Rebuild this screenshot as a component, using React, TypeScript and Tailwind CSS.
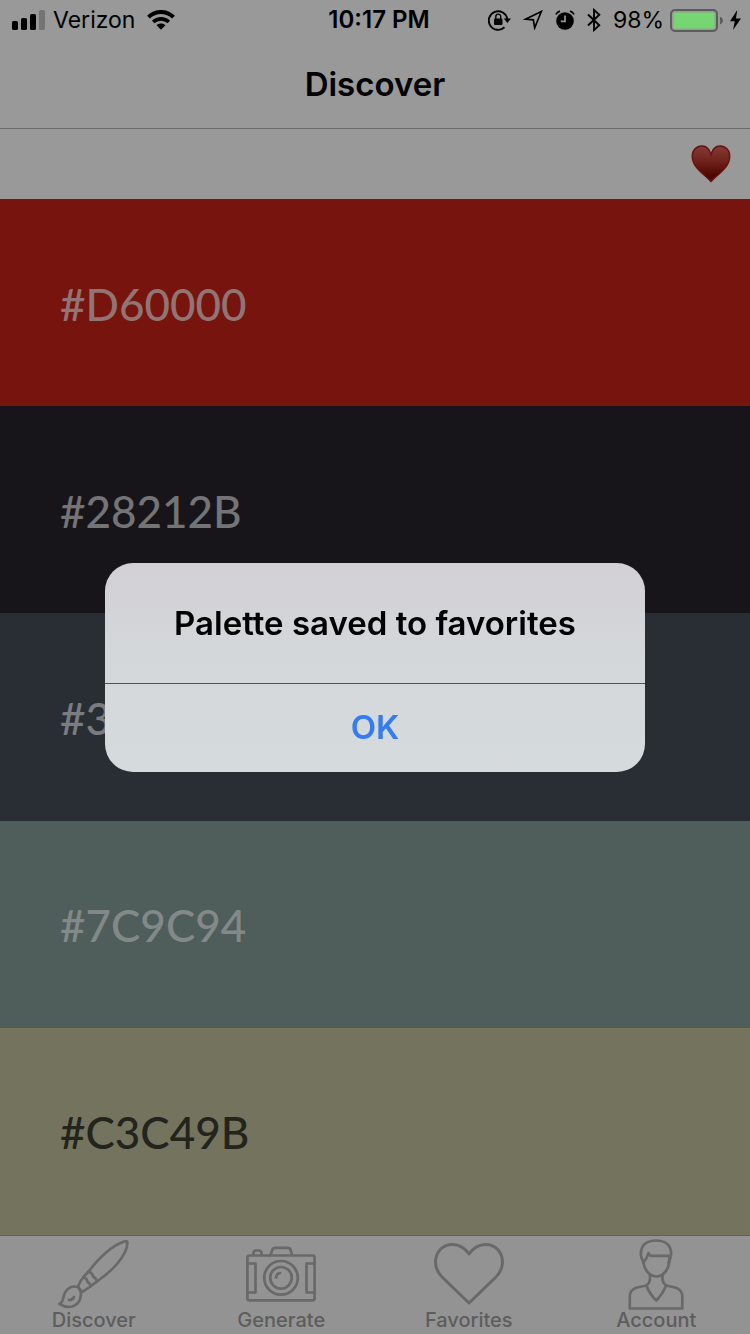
import React from "react";

type Swatch = { code: string; className: string };

const swatches: Swatch[] = [
  { code: "#D60000", className: "bg-[#76140d] text-[#917473]" },
  { code: "#28212B", className: "bg-[#17151a] text-[#747376]" },
  { code: "#3", className: "bg-[#292d34] text-[#7a7c80]" },
  { code: "#7C9C94", className: "bg-[#4f5e5a] text-[#828988]" },
  { code: "#C3C49B", className: "bg-[#74745e] text-[#23241d]" },
];

function SignalIcon() {
  return (
    <svg width="33" height="20" viewBox="0 0 33 20" aria-hidden="true">
      <rect x="0" y="11" width="6" height="9" rx="1.6" />
      <rect x="9" y="8" width="6" height="12" rx="1.6" />
      <rect x="18" y="4" width="6" height="16" rx="1.6" />
      <rect x="27" y="0" width="6" height="20" rx="1.6" fill="#747474" />
    </svg>
  );
}

function WifiIcon() {
  return (
    <svg width="28" height="20" viewBox="0 0 28 20" aria-hidden="true">
      <path d="M1.5 7.2C8.5 .2 19.500 .2 26.500 7.200" fill="none" stroke="#000" strokeWidth="4" />
      <path d="M6.200 12C10.600 7.800 17.400 7.800 21.800 12" fill="none" stroke="#000" strokeWidth="3.600" />
      <path d="M9.500 15.300C12 13 16 13 18.500 15.300L14 19.800Z" />
    </svg>
  );
}

function StatusIcons() {
  return (
    <>
      <svg width="23" height="22" viewBox="0 0 23 22" aria-hidden="true">
        <path d="M16.500 18.300A9.300 9.300 0 1 1 19.300 10" fill="none" stroke="#000" strokeWidth="1.900" />
        <path d="M15.800 9.500H23L19.400 14Z" />
        <rect x="6" y="9.500" width="8.500" height="6.500" rx="1" />
        <path d="M7.800 10V7.600a2.450 2.450 0 0 1 4.900 0V10" fill="none" stroke="#000" strokeWidth="1.400" />
      </svg>
      <svg className="ml-3" width="20" height="20" viewBox="0 0 20 20" aria-hidden="true">
        <path d="M18.300 1.500L2.500 9.200L10.300 9.800L11.700 17.800Z" fill="none" stroke="#000" strokeWidth="1.700" />
      </svg>
      <svg className="ml-3" width="20" height="20" viewBox="0 0 20 20" aria-hidden="true">
        <circle cx="10" cy="11" r="8.800" />
        <path d="M1 4.500Q2 2 5 1.200M19 4.500Q18 2 15 1.200" fill="none" stroke="#000" strokeWidth="1.800" />
        <path d="M10 5.500V11.300H5.800" fill="none" stroke="#999" strokeWidth="1.700" />
      </svg>
      <svg className="ml-3" width="14" height="24" viewBox="0 0 14 24" aria-hidden="true">
        <path d="M1 6.500L12.300 17.200L7 22V2L12.300 6.800L1 17.500" fill="none" stroke="#000" strokeWidth="1.900" />
      </svg>
    </>
  );
}

function BatteryIcon() {
  return (
    <svg className="ml-1.5" width="53" height="23" viewBox="0 0 53 23" aria-hidden="true">
      <rect x="1" y="1" width="46" height="21" rx="4" fill="none" stroke="#5c5c5c" strokeWidth="2" />
      <rect x="3.500" y="3.500" width="41" height="16" rx="1.500" fill="#76d672" />
      <path d="M50 7.500Q53 9 53 11.500Q53 14 50 15.500Z" fill="#5c5c5c" />
    </svg>
  );
}

function BoltIcon() {
  return (
    <svg className="ml-1.5" width="13" height="20" viewBox="0 0 13 20" aria-hidden="true">
      <path d="M8.200 0L1 11.200H5.800L4 20L12 8.400H7Z" />
    </svg>
  );
}

function SavedHeart() {
  return (
    <svg width="40" height="38" viewBox="0 0 40 38" aria-hidden="true">
      <defs>
        <linearGradient id="heart-fill" x1="0" y1="0" x2="0" y2="1">
          <stop offset="0" stopColor="#833b37" />
          <stop offset=".45" stopColor="#70201a" />
          <stop offset=".85" stopColor="#4d0600" />
          <stop offset="1" stopColor="#5a0a03" />
        </linearGradient>
      </defs>
      <path
        d="M20 9.500C18.500 4 15.500 1 11 1C5.500 1 1.200 5 1.200 11.500C1.200 21.500 11 27.500 20 36.500C29 27.500 38.800 21.500 38.800 11.500C38.800 5 34.500 1 29 1C24.500 1 21.500 4 20 9.500Z"
        fill="url(#heart-fill)"
        stroke="#66120c"
        strokeWidth="1.300"
      />
    </svg>
  );
}

const line = { fill: "none", stroke: "#696969", strokeWidth: 2.7, strokeLinejoin: "round", strokeLinecap: "round" } as const;

function BrushIcon() {
  return (
    <svg width="71" height="69" viewBox="0 0 71 69" {...line} aria-hidden="true">
      <path d="M30.500 31.500C41 18 54 6 65 2Q69 .5 69.300 2Q70 11 59 24C53 31 46 36.500 39 41.500L33 46Q29 49 24 52L20 46.500Q21.500 42 25.500 37Z" />
      <path d="M30.500 31.500Q34.500 33 35.500 37Q38 38 39 41.500" />
      <path d="M25.500 37Q29 38.500 29.500 42Q32 43 33 46" />
      <path d="M20 47Q14 45.500 10.500 48.500C6 52 6 55 5 59Q4 63 1.500 64Q8 68 14 66.500C21 64.500 24 58 22.500 51Z" />
      <path d="M11 60Q15 60 16 57" />
    </svg>
  );
}

function CameraIcon() {
  return (
    <svg width="70" height="56" viewBox="0 0 70 56" {...line} aria-hidden="true">
      <rect x="1.400" y="9.500" width="67.200" height="44.800" rx="2" />
      <path d="M7.500 9V7Q7.500 4.500 10 4.500H13Q15.500 4.500 15.500 7V9" />
      <path d="M24.500 9L26.500 3.500Q27 1.800 29 1.800H42Q44 1.800 44.500 3.500L46 9" />
      <path d="M1.400 17.500H9.500V46.500H1.400M68.600 17.500H60.500V46.500H68.600" />
      <circle cx="35" cy="31.800" r="16.800" />
      <circle cx="35" cy="31.800" r="10.800" />
      <path d="M30 31.500Q30.500 27.500 34 27" />
    </svg>
  );
}

function HeartIcon() {
  return (
    <svg width="70" height="62" viewBox="0 0 70 62" {...line} strokeWidth="3" aria-hidden="true">
      <path d="M35 11C30 4 25 1.500 18.500 1.500C8 1.500 1.500 9.500 1.500 19.500C1.500 26 4 30 8.500 34.500L35 60L61.500 34.500C66 30 68.500 26 68.500 19.500C68.500 9.500 62 1.500 51.500 1.500C45 1.500 40 4 35 11Z" />
    </svg>
  );
}

function PersonIcon() {
  return (
    <svg width="56" height="71" viewBox="0 0 56 71" {...line} aria-hidden="true">
      <path d="M15.500 23.500C10 13 13 1.500 28 1.500C43 1.500 46 13 40.500 23.500" />
      <path d="M15.500 23.500Q19.500 19 20.500 14Q21 16.800 24 16.800H41.500V20C41.500 29 36 37.500 28.500 37.500C21 37.500 16 30 15.500 23.500Z" />
      <path d="M22 36V40Q22 43.500 18.500 46.500Q21 54.500 28.300 61.500Q35 54.500 38 46.500Q34.500 43.500 34.500 40V36" />
      <path d="M18.500 46.500L9 48.500Q1.800 50.500 1.800 57.500V69.500H54.300V57.500Q54.300 50.500 47 48.500L38 46.500" />
    </svg>
  );
}

const tabs = [
  { label: "Discover", icon: <BrushIcon /> },
  { label: "Generate", icon: <CameraIcon /> },
  { label: "Favorites", icon: <HeartIcon /> },
  { label: "Account", icon: <PersonIcon /> },
];

export default function App() {
  return (
    <div className="flex min-h-screen flex-col bg-[#999999] font-['Inter',sans-serif] text-black">
      <div className="grid h-10 grid-cols-[1fr_auto_1fr] items-center px-2 text-[23px]">
        <div className="flex items-center pl-1">
          <SignalIcon />
          <span className="ml-2 mr-3">Verizon</span>
          <WifiIcon />
        </div>
        <span className="pl-2 text-2xl font-semibold">10:17 PM</span>
        <div className="flex items-center justify-end">
          <StatusIcons />
          <span className="ml-3">98%</span>
          <BatteryIcon />
          <BoltIcon />
        </div>
      </div>

      <header className="flex h-[89px] items-center justify-center border-b border-[#6b6b6b]">
        <h1 className="text-[33px] font-semibold leading-10">Discover</h1>
      </header>

      <main className="flex flex-1 flex-col">
        <div className="flex h-[70px] items-center justify-end px-[19px]">
          <button type="button" aria-label="Save palette">
            <SavedHeart />
          </button>
        </div>
        <ul className="flex flex-1 flex-col">
          {swatches.map((s) => (
            <li
              key={s.code}
              className={`flex flex-1 items-center px-[60px] pt-0.5 font-['Lato',sans-serif] text-[44px] font-medium leading-[52px] ${s.className}`}
            >
              {s.code}
            </li>
          ))}
        </ul>
      </main>

      <nav className="grid h-[99px] grid-cols-4 border-t border-[#626262] bg-[#939393] text-xl font-medium leading-6 text-[#5d5d5d]">
        {tabs.map((t) => (
          <a key={t.label} href="#" className="flex flex-col items-center">
            <span className="flex h-[76px] items-center justify-center">{t.icon}</span>
            <span className="leading-4">{t.label}</span>
          </a>
        ))}
      </nav>

      <div className="fixed inset-0 flex items-center justify-center">
        <div
          role="alertdialog"
          aria-labelledby="alert-title"
          className="w-[72%] overflow-hidden rounded-[28px] bg-linear-to-b from-[#d2d0d4] via-[#d4d8db] to-[#d5dadc] text-center text-[33px] font-semibold"
        >
          <h2 id="alert-title" className="flex h-[120px] items-center justify-center leading-10">
            Palette saved to favorites
          </h2>
          <button type="button" className="h-[89px] w-full border-t border-[#4b545e] text-[#347bf7]">
            OK
          </button>
        </div>
      </div>
    </div>
  );
}
